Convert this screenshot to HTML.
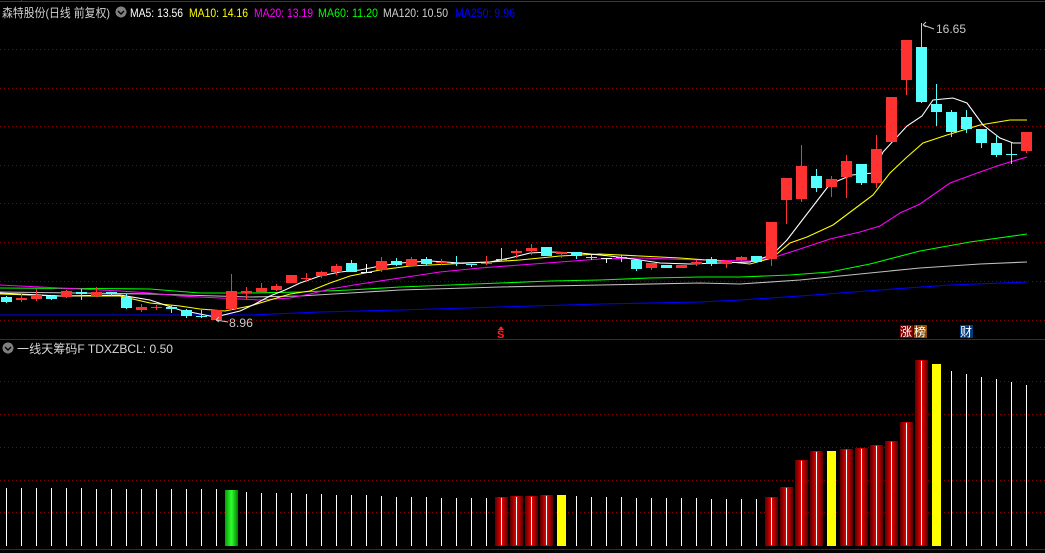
<!DOCTYPE html>
<html><head><meta charset="utf-8">
<style>
html,body{margin:0;padding:0;background:#000;width:1045px;height:553px;overflow:hidden}
svg{display:block}
text{font-family:"Liberation Sans","Noto Sans CJK SC",sans-serif}
</style></head>
<body>
<svg id="s" width="1045" height="553" viewBox="0 0 1045 553" xmlns="http://www.w3.org/2000/svg" shape-rendering="crispEdges">
<defs>
<linearGradient id="gr" x1="0" x2="1" y1="0" y2="0">
<stop offset="0" stop-color="#5a0000"/><stop offset="0.45" stop-color="#e00000"/><stop offset="0.5" stop-color="#ff2020"/><stop offset="0.55" stop-color="#e00000"/><stop offset="1" stop-color="#5a0000"/>
</linearGradient>
<linearGradient id="gg" x1="0" x2="1" y1="0" y2="0">
<stop offset="0" stop-color="#00a000"/><stop offset="0.5" stop-color="#30ff30"/><stop offset="1" stop-color="#008000"/>
</linearGradient>
</defs>
<line x1="0" y1="1.5" x2="1045" y2="1.5" stroke="#c00000" stroke-width="1"/>
<line x1="21.5" y1="0" x2="21.5" y2="2" stroke="#c00000"/>
<g id="grid" stroke="#8a0000" stroke-width="1" stroke-dasharray="1 3"></g>
<line x1="0" y1="339.5" x2="1045" y2="339.5" stroke="#a00000"/>
<line x1="0" y1="549.5" x2="1045" y2="549.5" stroke="#a00000"/>
<g id="ma" fill="none" shape-rendering="auto"></g>
<g id="cd"></g>
<g id="bars"></g>
<!-- header -->
<text x="2" y="17" fill="#d0d0d0" font-size="12" textLength="108" lengthAdjust="spacingAndGlyphs">森特股份(日线 前复权)</text>
<circle cx="121" cy="12" r="5.5" fill="#808080"/>
<path d="M118 11 L121 14 L124 11" stroke="#000" stroke-width="1.4" fill="none" shape-rendering="auto"/>
<text x="130" y="17" fill="#ffffff" font-size="12" textLength="53" lengthAdjust="spacingAndGlyphs">MA5: 13.56</text>
<text x="189" y="17" fill="#ffff00" font-size="12" textLength="59" lengthAdjust="spacingAndGlyphs">MA10: 14.16</text>
<text x="254" y="17" fill="#ff00ff" font-size="12" textLength="59" lengthAdjust="spacingAndGlyphs">MA20: 13.19</text>
<text x="318" y="17" fill="#00ff00" font-size="12" textLength="60" lengthAdjust="spacingAndGlyphs">MA60: 11.20</text>
<text x="383" y="17" fill="#d0d0d0" font-size="12" textLength="65" lengthAdjust="spacingAndGlyphs">MA120: 10.50</text>
<text x="455" y="17" fill="#0000ff" font-size="12" textLength="60" lengthAdjust="spacingAndGlyphs">MA250: 9.96</text>
<!-- labels -->
<text x="936" y="33" fill="#c8c8c8" font-size="12" textLength="30" lengthAdjust="spacingAndGlyphs">16.65</text>
<path d="M923 25 L926 22 M923 25 L926 27 M923 25 L934 29" stroke="#c8c8c8" fill="none" shape-rendering="auto"/>
<text x="229" y="327" fill="#c8c8c8" font-size="12" textLength="24" lengthAdjust="spacingAndGlyphs">8.96</text>
<path d="M216 320 L219 317 M216 320 L219 322 M216 320 L228 322" stroke="#c8c8c8" fill="none" shape-rendering="auto"/>
<text x="497" y="338" fill="#ff2020" font-size="11" font-weight="bold">S</text>
<path d="M498 330 L501 326 L504 330 Z" fill="#ff2020"/>
<rect x="900" y="325" width="13" height="13" fill="#800000"/>
<text x="900" y="336" fill="#fff" font-size="12">涨</text>
<rect x="914" y="325" width="13" height="13" fill="#8a4a00"/>
<text x="914" y="336" fill="#fff" font-size="12">榜</text>
<rect x="960" y="325" width="13" height="13" fill="#003a80"/>
<text x="960" y="336" fill="#fff" font-size="12">财</text>
<circle cx="8" cy="348" r="5.5" fill="#808080"/>
<path d="M5 347 L8 350 L11 347" stroke="#000" stroke-width="1.4" fill="none" shape-rendering="auto"/>
<text x="17" y="353" fill="#d8d8d8" font-size="12" textLength="156" lengthAdjust="spacingAndGlyphs">一线天筹码F  TDXZBCL: 0.50</text>
</svg>
<script>
var NS="http://www.w3.org/2000/svg";
function el(p,t,a){var e=document.createElementNS(NS,t);for(var k in a)e.setAttribute(k,a[k]);p.appendChild(e);return e;}
var g=document.getElementById('grid');
[49,88,126,165,203,242,281,320,381,414,447,480,512].forEach(function(y){el(g,'line',{x1:0,x2:1045,y1:y+.5,y2:y+.5});});
var ma=document.getElementById('ma');
function pl(c,pts){el(ma,'polyline',{stroke:c,'stroke-width':1.1,points:pts.map(function(p){return p[0]+','+p[1]}).join(' ')});}
pl('#0000ff',[[0,315],[250,315],[320,312],[400,310],[500,307],[600,304],[700,302],[740,300],[800,296],[880,290],[950,285],[1027,282]]);
pl('#c0c0c0',[[0,292],[150,294],[250,297],[300,296],[350,293],[400,290],[500,287],[600,285],[700,283],[740,284],[800,280],[860,274],[920,268],[980,264],[1027,262]]);
pl('#00ff00',[[0,288],[150,289],[200,293],[250,293],[300,292],[350,290],[400,287],[450,285],[500,283],[550,281],[600,280],[650,278],[700,277],[740,277],[790,275],[830,272],[870,264],[920,251],[970,242],[1027,234]]);
pl('#ff00ff',[[0,285],[60,288],[120,291],[150,293],[180,296],[220,298],[260,300],[290,298],[310,294],[330,289],[360,284],[400,278],[440,272],[480,268],[520,265],[560,262],[600,259],[640,258],[700,260],[750,261],[772,258],[800,249],[830,239],[860,232],[880,226],[900,213],[920,204],[950,183],[980,172],[1000,165],[1027,157]]);
pl('#ffff00',[[0,294],[60,296],[120,296],[150,303],[180,306],[200,309],[225,311],[250,306],[270,300],[290,294],[310,291],[330,283],[350,276],[380,270],[410,266],[450,264],[490,262],[520,260],[560,256],[600,254],[640,256],[680,258],[720,261],[750,264],[772,258],[790,243],[807,237],[833,225],[857,207],[873,195],[890,173],[907,157],[923,143],[947,135],[980,125],[1010,120],[1027,120]]);
pl('#ffffff',[[0,293],[60,296],[120,295],[150,300],[180,310],[200,314],[215,317],[240,311],[255,304],[270,296],[285,290],[300,283],[320,276],[340,272],[360,270],[380,266],[400,263],[430,261],[460,263],[490,262],[510,258],[530,253],[550,252],[580,253],[610,256],[640,260],[660,263],[690,264],[720,263],[750,262],[772,255],[787,240],[810,210],[830,184],[852,175],[873,173],[883,152],[907,126],[922,116],[933,100],[953,98],[967,103],[983,125],[1000,138],[1013,143],[1027,143]]);
var C=[
['C',297,302,296,303],['R',298,300,293,302],['R',295,299,289,301],['C',296,299,295,300],['R',291,297,290,298],['C',292,294,289,300],['R',292,296,287,297],['C',292,294,292,296],['C',297,308,294,309],['R',307,310,304,312],
['R',307,308,305,310],['C',307,309,305,313],['C',310,316,309,318],['C',316,317,310,318],['R',310,320,310,320],['R',291,309,274,310],['R',291,293,287,299],['R',288,292,283,292],['R',286,290,284,291],['R',275,283,275,283],
['R',278,279,273,282],['R',272,276,271,278],['R',266,272,264,275],['C',263,272,260,272],['W',272,272,264,272],['R',261,270,257,272],['C',261,265,258,266],['R',259,266,257,267],['C',259,264,257,265],['R',262,263,259,265],
['C',263,264,256,266],['C',264,265,264,267],['R',263,264,256,265],['C',259,260,248,261],['R',251,253,249,258],['R',248,251,244,255],['C',247,256,247,256],['R',252,254,252,258],['C',252,256,252,259],['C',257,258,255,260],
['W',258,259,258,263],['C',257,258,255,262],['C',260,269,260,271],['R',263,268,263,270],['C',265,268,265,268],['R',265,268,265,268],['R',262,264,260,266],['C',259,264,257,266],['R',261,264,260,268],['R',257,260,256,262],
['C',256,262,256,263],['R',222,259,222,266],['R',178,200,178,224],['R',166,199,145,202],['C',176,188,169,192],['R',179,187,176,197],['R',161,177,155,198],['C',164,183,164,185],['R',149,183,135,188],['R',97,142,97,142],
['R',40,80,40,95],['C',47,102,23,103],['C',104,112,84,126],['C',112,132,110,137],['C',117,129,110,133],['C',129,143,129,148],['C',143,155,135,157],['C',154,155,143,164],['R',132,151,132,153]
];
var cd=document.getElementById('cd');
var col={R:'#ff3232',C:'#54ffff',W:'#ffffff'};
C.forEach(function(c,i){
 var x=6+15*i, f=col[c[0]];
 el(cd,'rect',{x:x,y:c[3],width:1,height:Math.max(1,c[4]-c[3]),fill:f});
 var h=Math.max(1,c[2]-c[1]);
 el(cd,'rect',{x:x-5,y:c[1],width:11,height:h,fill:f});
});
var tops=[488,488,488,488,488,488,489,489,489,489,489,489,489,489,489,490,492,493,493,493,494,494,495,495,495,496,497,497,497,498,498,498,498,
497,496,496,495,495,496,497,497,497,498,498,498,498,498,499,499,499,499,497,487,460,451,451,449,448,445,441,422,360,364,371,374,377,379,382,385];
var b=document.getElementById('bars');
tops.forEach(function(t,i){
 var x=6+15*i, t2=546;
 var red=(i>=33&&i<=36)||i==51||i==52||i==53||i==54||(i>=56&&i<=61);
 var yel=(i==37||i==55||i==62);
 if(i==15){el(b,'rect',{x:x-6,y:t,width:13,height:t2-t,fill:'url(#gg)'});}
 else if(red){el(b,'rect',{x:x-6,y:t,width:13,height:t2-t,fill:'url(#gr)'});el(b,'rect',{x:x,y:t+1,width:1,height:t2-t-2,fill:'#fff'});}
 else if(yel){el(b,'rect',{x:x-4,y:t,width:9,height:t2-t,fill:'#ffff00'});}
 else{el(b,'rect',{x:x,y:t,width:1,height:t2-t,fill:'#fff'});}
});
</script>
</body></html>
